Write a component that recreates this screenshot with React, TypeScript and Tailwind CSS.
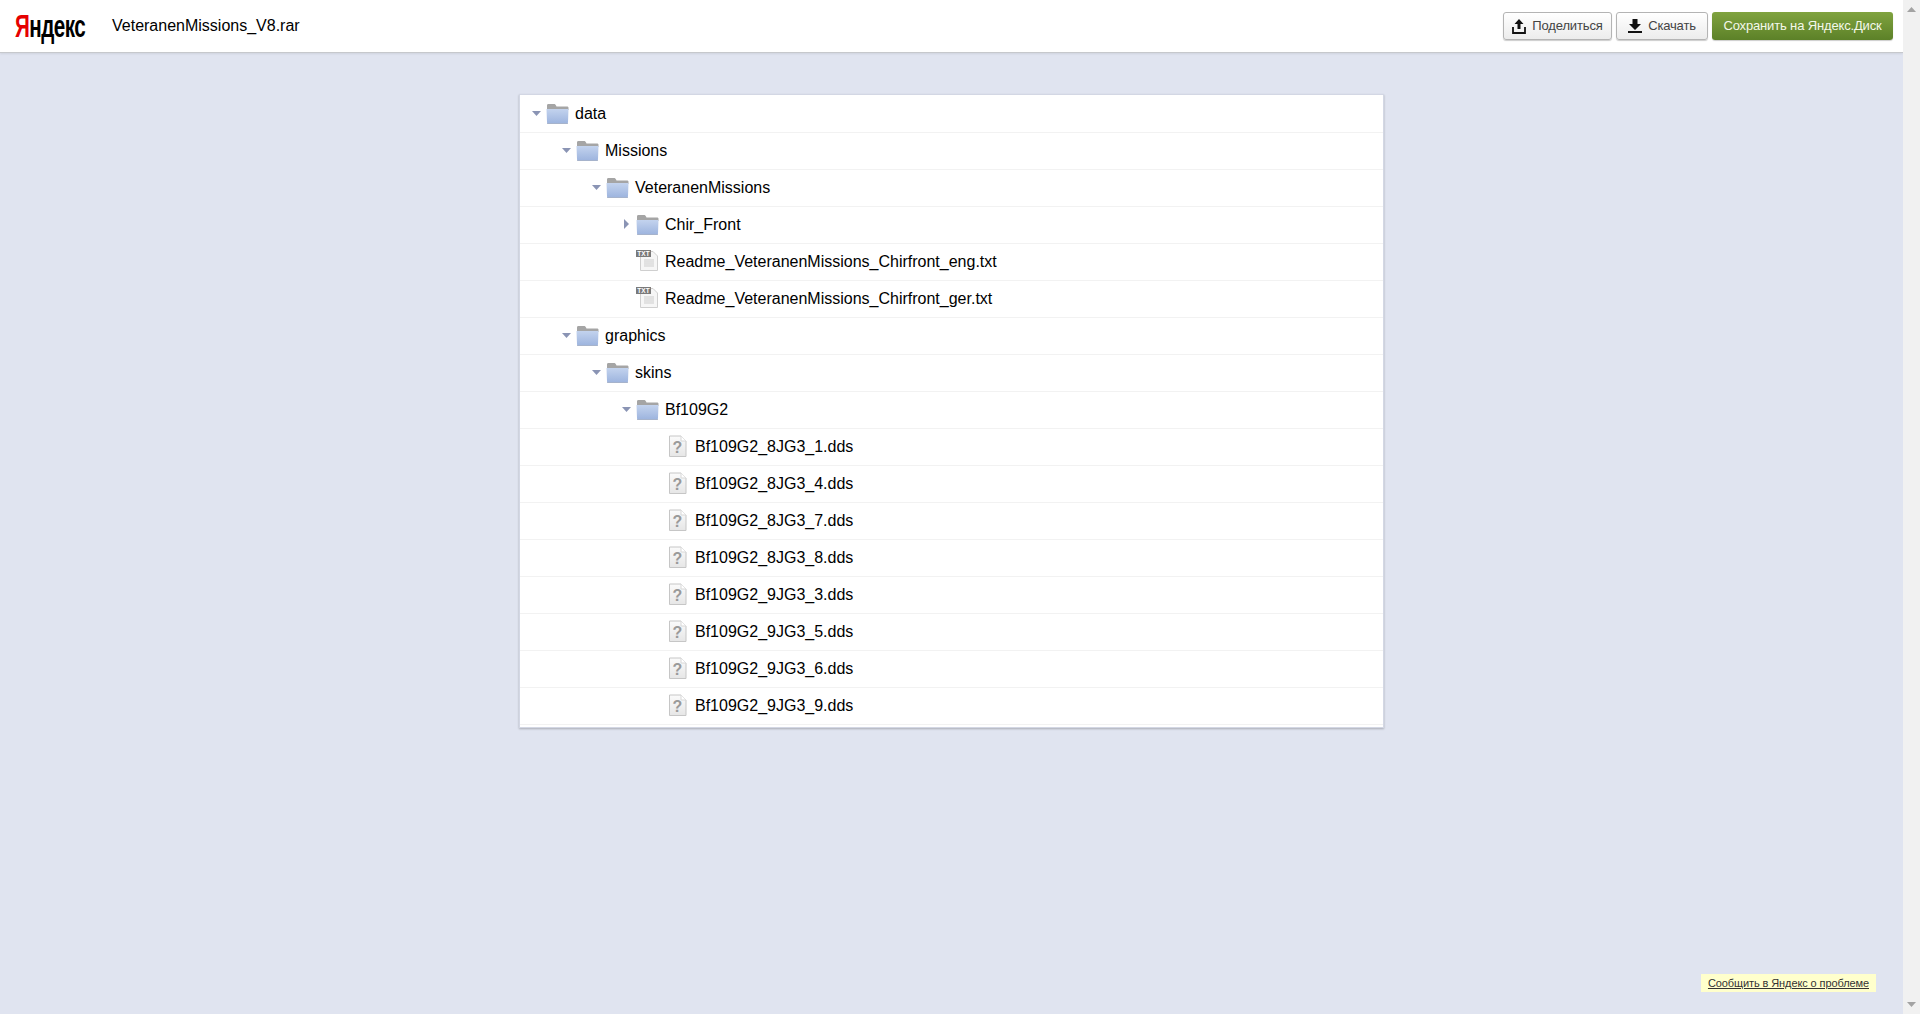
import React from "react";

type Row = { name: string; level: number; kind: "folder" | "txt" | "file"; arrow?: "down" | "right" };

const rows: Row[] = [
  { name: "data", level: 0, kind: "folder", arrow: "down" },
  { name: "Missions", level: 1, kind: "folder", arrow: "down" },
  { name: "VeteranenMissions", level: 2, kind: "folder", arrow: "down" },
  { name: "Chir_Front", level: 3, kind: "folder", arrow: "right" },
  { name: "Readme_VeteranenMissions_Chirfront_eng.txt", level: 3, kind: "txt" },
  { name: "Readme_VeteranenMissions_Chirfront_ger.txt", level: 3, kind: "txt" },
  { name: "graphics", level: 1, kind: "folder", arrow: "down" },
  { name: "skins", level: 2, kind: "folder", arrow: "down" },
  { name: "Bf109G2", level: 3, kind: "folder", arrow: "down" },
  { name: "Bf109G2_8JG3_1.dds", level: 4, kind: "file" },
  { name: "Bf109G2_8JG3_4.dds", level: 4, kind: "file" },
  { name: "Bf109G2_8JG3_7.dds", level: 4, kind: "file" },
  { name: "Bf109G2_8JG3_8.dds", level: 4, kind: "file" },
  { name: "Bf109G2_9JG3_3.dds", level: 4, kind: "file" },
  { name: "Bf109G2_9JG3_5.dds", level: 4, kind: "file" },
  { name: "Bf109G2_9JG3_6.dds", level: 4, kind: "file" },
  { name: "Bf109G2_9JG3_9.dds", level: 4, kind: "file" },
];

const FolderIcon = ({ id }: { id: number }) => (
  <svg width="23" height="21" viewBox="0 0 23 21" className="shrink-0">
    <defs>
      <linearGradient id={`folder-${id}`} x1="0" y1="0" x2="0" y2="1">
        <stop offset="0" stopColor="#c3d3ee" />
        <stop offset="1" stopColor="#9db4de" />
      </linearGradient>
    </defs>
    <path d="M1 5V2.500C1 1.500 1.500 1 2.500 1H8C9 1 9.500 1.500 10 2.500L10.500 3.500H21C22 3.500 22.500 4 22.500 5V7H1Z" fill="#a5a5a5" />
    <path d="M0.500 6H22.500L22 19C22 20 21.500 20.500 20.500 20.500H2.500C1.500 20.500 1 20 1 19Z" fill={`url(#folder-${id})`} />
    <path d="M1 20.500H22" stroke="#8d9ab5" strokeWidth="1" opacity="0.6" />
  </svg>
);

const TxtIcon = () => (
  <svg width="23" height="22" viewBox="0 0 23 22" className="shrink-0">
    <path d="M4.500 1.500H17L21.500 6V20.500H4.500Z" fill="#f6f6f6" stroke="#cfcfcf" />
    <path d="M8 10H18M8 12H18M8 14H18M8 16H18" stroke="#cdcdcd" strokeWidth="1" />
    <rect x="0" y="0" width="15" height="7" fill="#7a7a7a" />
    <text x="7.500" y="6" textAnchor="middle" fontSize="6.500" fontWeight="700" fill="#fff" fontFamily="'Liberation Sans', sans-serif">TXT</text>
  </svg>
);

const UnknownIcon = ({ id }: { id: number }) => (
  <svg width="19" height="23" viewBox="0 0 19 23" className="shrink-0">
    <defs>
      <linearGradient id={`page-${id}`} x1="0" y1="0" x2="0" y2="1">
        <stop offset="0" stopColor="#fbfbfb" />
        <stop offset="1" stopColor="#e6e6e6" />
      </linearGradient>
    </defs>
    <path d="M1.500 1H13L18 6V21.500H1.500Z" fill={`url(#page-${id})`} stroke="#c6c6c6" />
    <path d="M13 1V6H18" fill="#fff" stroke="#d8d8d8" />
    <text x="9.500" y="18" textAnchor="middle" fontSize="16" fontWeight="700" fill="#9a9a9a" fontFamily="'Liberation Sans', sans-serif">?</text>
  </svg>
);

const TreeRow = ({ row, index }: { row: Row; index: number }) => (
  <div className="flex h-[37px] items-center border-b border-[#f2f2f2] pl-3">
    <div style={{ width: row.level * 30 }} className="shrink-0" />
    <div className="mr-[5px] flex w-[9px] shrink-0 justify-center pb-[2px]">
      {row.arrow === "down" && (
        <svg width="9" height="5" viewBox="0 0 9 5"><path d="M0 0H9L4.500 5Z" fill="#8a94b4" /></svg>
      )}
      {row.arrow === "right" && (
        <svg width="5" height="10" viewBox="0 0 5 10"><path d="M0 0V10L5 5Z" fill="#8a94b4" /></svg>
      )}
    </div>
    <div className="mr-[6px] flex w-[23px] shrink-0 justify-center pb-[2px]">
      {row.kind === "folder" && <FolderIcon id={index} />}
      {row.kind === "txt" && <TxtIcon />}
      {row.kind === "file" && <UnknownIcon id={index} />}
    </div>
    <span className="text-base text-black">{row.name}</span>
  </div>
);

export default function App() {
  return (
    <div className="flex h-screen overflow-hidden font-['Liberation_Sans',Arial,sans-serif]">
      <div className="flex min-w-0 flex-1 flex-col bg-[#e0e4f0]">
        <header className="flex h-[53px] shrink-0 items-center border-b border-[#c6c8cc] bg-white pl-[15px] pr-[10px] shadow-[0_1px_2px_rgba(0,0,0,0.08)]">
          <div className="w-[70px] origin-left scale-x-[0.645] whitespace-nowrap text-[32px] font-bold leading-none tracking-tight text-black">
            <span className="text-[#e60000]">Я</span>ндекс
          </div>
          <div className="ml-[27px] text-base text-black">VeteranenMissions_V8.rar</div>
          <div className="ml-auto flex gap-1">
            <button className="flex h-[28px] w-[109px] items-center justify-center gap-[6px] rounded-[3px] border border-[#b4b4b4] bg-gradient-to-b from-white to-[#ececec] text-[13px] tracking-[-0.15px] text-[#444] shadow-[0_1px_1px_rgba(0,0,0,0.2)]">
              <svg width="14" height="16" viewBox="0 0 14 16">
                <path d="M7 1L11.500 6H8.500V11H5.500V6H2.500Z" fill="#111" />
                <path d="M1 9V15H13V9" fill="none" stroke="#111" strokeWidth="1.800" />
              </svg>
              Поделиться
            </button>
            <button className="flex h-[28px] w-[92px] items-center justify-center gap-[6px] rounded-[3px] border border-[#b4b4b4] bg-gradient-to-b from-white to-[#ececec] text-[13px] tracking-[-0.15px] text-[#444] shadow-[0_1px_1px_rgba(0,0,0,0.2)]">
              <svg width="14" height="14" viewBox="0 0 14 14">
                <path d="M4.500 0H9.500V5H13L7 11L1 5H4.500Z" fill="#111" />
                <rect x="0" y="12" width="14" height="2" fill="#111" />
              </svg>
              Скачать
            </button>
            <button className="h-[28px] w-[181px] rounded-[3px] bg-gradient-to-b from-[#80a33f] to-[#5c8128] text-[13px] tracking-[-0.15px] text-[#f4f8ea] shadow-[0_1px_1px_rgba(0,0,0,0.2)]">
              Сохранить на Яндекс.Диск
            </button>
          </div>
        </header>
        <main className="relative flex-1 pt-[41px]">
          <div className="ml-[519px] w-[865px] border border-[#d3d7e4] bg-white pb-[2px] pt-px shadow-[0_1px_2px_rgba(0,0,0,0.25)]">
            {rows.map((row, i) => (
              <TreeRow key={row.name} row={row} index={i} />
            ))}
          </div>
          <a className="absolute bottom-[22px] right-[27px] bg-[#ffffcc] px-[7px] py-[2px] text-[11px] leading-[14px] tracking-[-0.1px] text-[#333] underline">
            Сообщить в Яндекс о проблеме
          </a>
        </main>
      </div>
      <div className="flex w-[17px] shrink-0 flex-col items-center justify-between bg-[#f1f1f1] py-[7px]">
        <svg width="9" height="5" viewBox="0 0 9 5"><path d="M4.500 0L9 5H0Z" fill="#a3a3a3" /></svg>
        <svg width="9" height="5" viewBox="0 0 9 5"><path d="M0 0H9L4.500 5Z" fill="#a3a3a3" /></svg>
      </div>
    </div>
  );
}
